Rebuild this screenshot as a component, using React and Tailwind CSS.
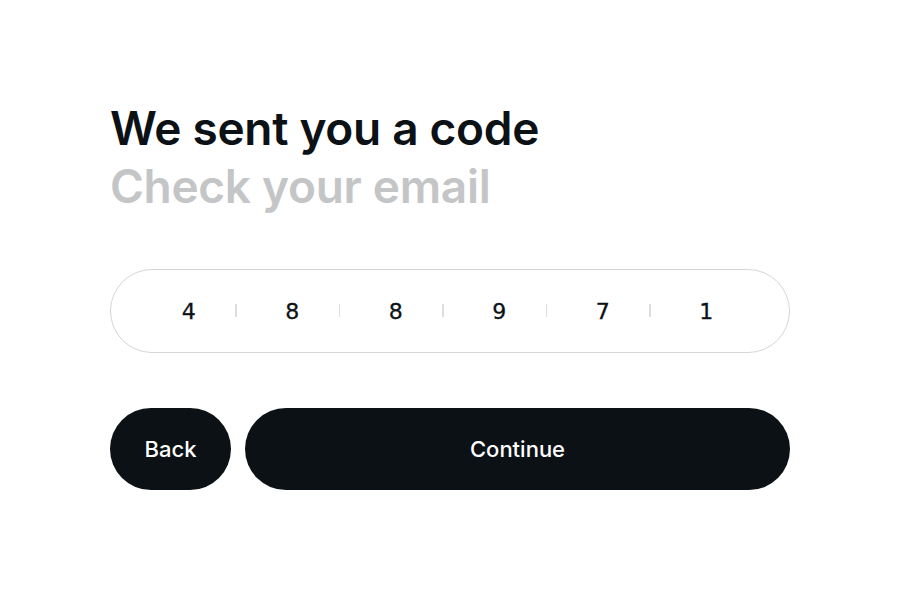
export default function App() {
  const digits = ["4", "8", "8", "9", "7", "1"];
  return (
    <div className="w-[900px] h-[599px] bg-white" style={{ fontFamily: "Inter, 'Noto Sans', sans-serif" }}>
      <div className="pt-[99px] pl-[110px] w-[790px]">
        <h1 className="text-[46px] leading-[58px] font-semibold tracking-[-0.3px] text-[#0c1116]">We sent you a code</h1>
        <p className="text-[46px] leading-[58px] font-semibold tracking-[-0.3px] text-[#c4c5c6]">Check your email</p>
        <div className="mt-[54px] h-[84px] rounded-full border-[1.5px] border-[#d6d6d6] flex items-center pl-[26px] pr-[31px]">
          {digits.map((d, i) => (
            <div key={i} className="flex-1 flex items-center relative h-full">
              <span className="flex-1 text-center text-[22px] text-[#0c1116]" style={{ fontFamily: "'DejaVu Sans', sans-serif", WebkitTextStroke: "0.3px #0c1116" }}>{d}</span>
              {i < digits.length - 1 && <span className="absolute right-[4px] top-[34px] w-[1.5px] h-[13px] bg-[#dedede]" />}
            </div>
          ))}
        </div>
        <div className="mt-[55px] flex gap-[14px]">
          <button className="w-[121px] h-[82px] rounded-full bg-[#0c1116] text-white text-[22px] font-medium">Back</button>
          <button className="flex-1 h-[82px] rounded-full bg-[#0c1116] text-white text-[22px] font-medium">Continue</button>
        </div>
      </div>
    </div>
  );
}
